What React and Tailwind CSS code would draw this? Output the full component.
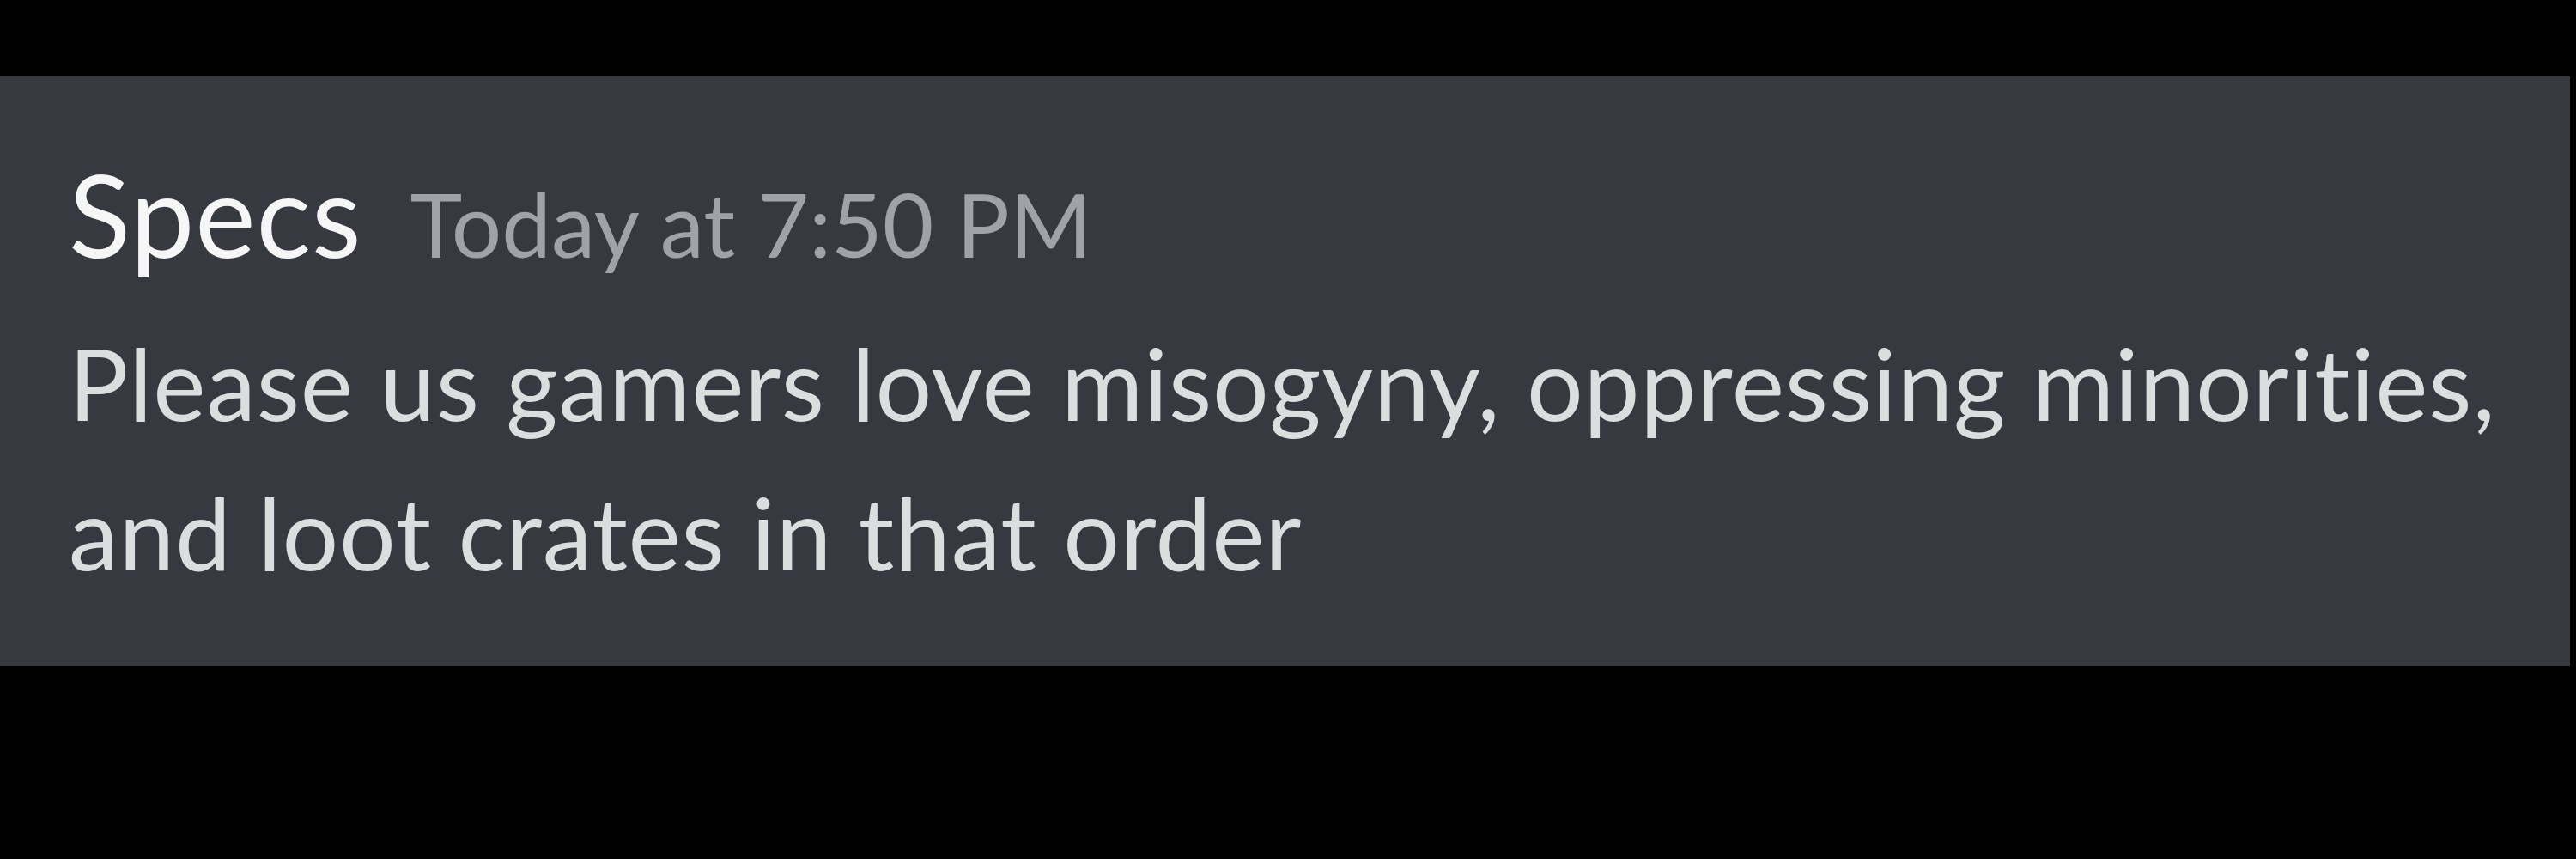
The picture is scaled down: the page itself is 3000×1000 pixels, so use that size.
export default function App() {
    return (
        <div className="min-h-screen w-full bg-black pt-[89px]" style={{ fontFamily: "Lato, 'Open Sans', sans-serif" }}>
            {/* Message */}
            <div className="w-[2993px] h-[686px] bg-[#36393f] pl-[80px] pt-[80px] [font-variant-ligatures:none]">
                <div className="flex items-baseline">
                    <span className="text-[133px] leading-[1.2] tracking-[1px] text-[#f6f6f7]">Specs</span>
                    <span className="ml-[56px] text-[103px] leading-[1.2] text-[#9fa2a8]">Today at 7:50 PM</span>
                </div>
                <p className="mt-[30px] max-w-[2890px] text-[116px] leading-[174px] tracking-[0.8px] text-[#dcddde]">
                    Please us gamers love misogyny, oppressing minorities, and loot crates in that order
                </p>
            </div>
        </div>
    );
}
